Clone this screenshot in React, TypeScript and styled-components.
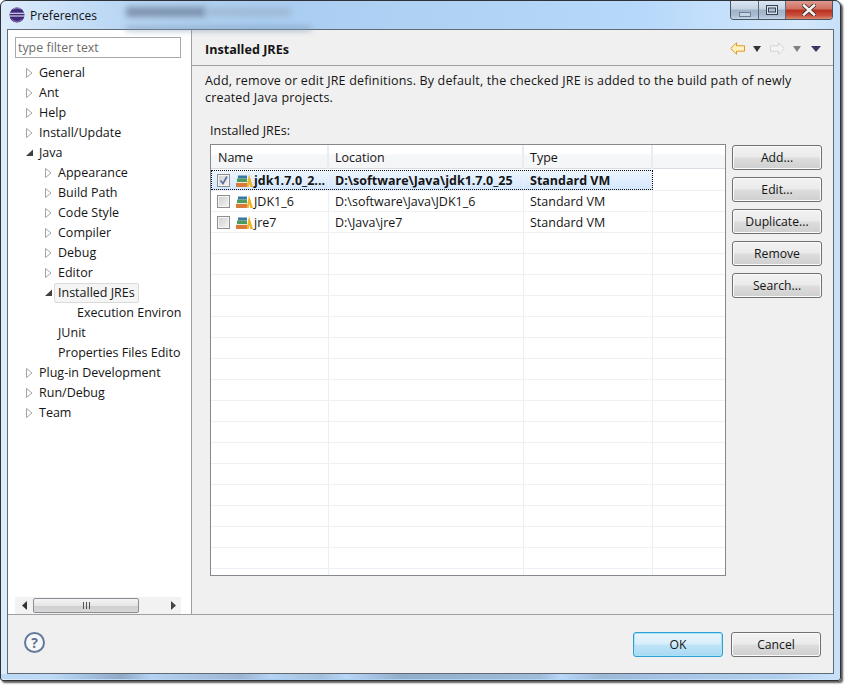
import React from "react";
import styled, { createGlobalStyle } from "styled-components";

const Global = createGlobalStyle`
  html, body { margin: 0; padding: 0; background: #fff; }
  body { font-family: "Open Sans", "Noto Sans", "Liberation Sans", sans-serif; font-size: 12.5px; color: #151515; }
  * { box-sizing: border-box; }
`;

const Page = styled.div`
  width: 845px;
  height: 685px;
  overflow: hidden;
  background: #fff;
`;

const Win = styled.div`
  position: relative;
  width: 841px;
  height: 681px;
  display: flex;
  flex-direction: column;
  border: 1px solid #2e3136;
  border-radius: 6px 6px 3px 3px;
  box-shadow: 2px 2px 2px #5c5c5c;
  overflow: hidden;
  background:
    linear-gradient(90deg, #bcd9f6 0, #bcd9f6 50px, #a9c6e6 80px, #8fa9c6 120px, #b4d2f2 150px, #9db5d2 240px, #b5d3f3 270px, #a4bfdd 320px, #b8d6f6 345px, #93aecd 400px, #a1bcda 540px, #b9d7f7 560px, #9db9d8 600px, #aac8e8 700px, #b0cfee 780px, #c6e0f9 830px) bottom 1px left 0 / 100% 5px no-repeat,
    linear-gradient(90deg, #dcecfb 0, #bcd8f4 110px, #a9cdf0 260px, #b6d8fa 640px, #d4e8fc 800px, #c7e0f8 100%);
`;

const TitleBar = styled.div`
  position: relative;
  height: 28px;
  flex: none;
  display: flex;
  align-items: center;
  padding-left: 8px;
  gap: 5px;
`;

const TitleText = styled.span`
  font-size: 12px;
  color: #111;
`;

const BlurBand = styled.div<{ $left: number; $top: number; $width: number; $height: number; $tone: string }>`
  position: absolute;
  left: ${(p) => p.$left}px;
  top: ${(p) => p.$top}px;
  width: ${(p) => p.$width}px;
  height: ${(p) => p.$height}px;
  background: ${(p) => p.$tone};
  filter: blur(3px);
`;

const Controls = styled.div`
  position: absolute;
  right: 7px;
  top: 0;
  display: flex;
  height: 19px;
  border: 1px solid #4a5562;
  border-top: none;
  border-radius: 0 0 4px 4px;
  overflow: hidden;
`;

const ControlButton = styled.div<{ $w: number; $close?: boolean }>`
  width: ${(p) => p.$w}px;
  display: flex;
  align-items: center;
  justify-content: center;
  border-right: ${(p) => (p.$close ? "none" : "1px solid #5b6978")};
  background: ${(p) =>
    p.$close
      ? "linear-gradient(180deg, #dd9a8e 0, #cf6f60 45%, #b8301d 50%, #c9503d 80%, #d98a70 100%)"
      : "linear-gradient(180deg, #dbe6f2 0, #c3d2e3 45%, #9fb2c8 50%, #a9bcd2 80%, #c4d6e8 100%)"};
`;

const Client = styled.div`
  flex: 1;
  min-height: 0;
  margin: 0 6px 6px;
  border: 1px solid #626a73;
  display: flex;
  flex-direction: column;
  background: #f0f0f0;
`;

const Main = styled.div`
  flex: 1;
  min-height: 0;
  display: flex;
`;

const LeftPane = styled.div`
  width: 184px;
  flex: none;
  display: flex;
  flex-direction: column;
  background: #fff;
  border-right: 1px solid #a0a0a0;
  padding: 7px 10px 0 7px;
`;

const Filter = styled.div`
  height: 21px;
  flex: none;
  border: 1px solid #a9a9a9;
  padding: 0 2px;
  line-height: 19px;
  color: #6d6d6d;
  font-size: 12.4px;
`;

const Tree = styled.div`
  margin-top: 5px;
  flex: 1;
  min-height: 0;
  overflow: hidden;
`;

const TreeRow = styled.div<{ $depth: number }>`
  height: 20px;
  display: flex;
  align-items: center;
  white-space: nowrap;
  padding-left: ${(p) => p.$depth * 19 + 11}px;
`;

const ArrowSlot = styled.span`
  width: 7px;
  height: 10px;
  flex: none;
  margin-right: 5px;
  display: flex;
`;

const TreeLabel = styled.span<{ $selected?: boolean }>`
  height: 20px;
  line-height: 18px;
  flex: none;
  padding: 0 3px;
  margin-left: -3px;
  border: 1px solid ${(p) => (p.$selected ? "#dadada" : "transparent")};
  border-radius: 2px;
  background: ${(p) => (p.$selected ? "#f5f5f5" : "transparent")};
`;

const HScroll = styled.div`
  height: 17px;
  flex: none;
  display: flex;
  align-items: center;
  background: #f2f2f2;
  padding: 0 5px 0 7px;
`;

const Thumb = styled.div`
  width: 106px;
  height: 15px;
  margin-left: 6px;
  margin-right: auto;
  border: 1px solid #8a8f96;
  border-radius: 2px;
  background: linear-gradient(180deg, #f4f4f4 0, #e6e6e6 50%, #cfcfcf 52%, #d8d8d8 100%);
  display: flex;
  align-items: center;
  justify-content: center;
`;

const RightPane = styled.div`
  flex: 1;
  min-width: 0;
  display: flex;
  flex-direction: column;
`;

const Header = styled.div`
  height: 36px;
  flex: none;
  border-bottom: 1px solid #a0a0a0;
  display: flex;
  align-items: center;
  padding: 2px 12px 0 13px;
`;

const HeaderTitle = styled.h1`
  margin: 2px 0 0;
  font-size: 12.6px;
  font-weight: 700;
  flex: 1;
`;

const NavIcons = styled.div`
  display: flex;
  align-items: center;
`;

const Description = styled.p`
  margin: 6px 0 0 13px;
  width: 590px;
  line-height: 17px;
  letter-spacing: 0.17px;
`;

const SectionLabel = styled.div`
  margin: 16px 0 0 18px;
  height: 17px;
  line-height: 17px;
`;

const TableArea = styled.div`
  flex: 1;
  min-height: 0;
  display: flex;
  gap: 6px;
  margin: 5px 11px 38px 18px;
`;

const Table = styled.div`
  width: 517px;
  border: 1px solid #85898d;
  background: #fff;
  overflow: hidden;
`;

const HeaderRow = styled.div`
  height: 24px;
  display: flex;
  background: linear-gradient(180deg, #fff 0, #fff 40%, #f6f7f9 42%, #f4f5f7 100%);
  border-bottom: 1px solid #d8dce2;
`;

const Cols = styled.div<{ $selected?: boolean }>`
  width: 442px;
  flex: none;
  display: grid;
  grid-template-columns: 118px 195px 129px;
  background: ${(p) => (p.$selected ? "linear-gradient(180deg, #eef6fe 0, #d3e6fc 100%)" : "transparent")};
  outline: ${(p) => (p.$selected ? "1px dotted #111" : "none")};
  outline-offset: -1px;
  font-weight: ${(p) => (p.$selected ? 700 : 400)};
`;

const HeadCell = styled.div`
  line-height: 23px;
  padding: 1px 0 0 6px;
  border-right: 2px solid #e9ecf1;
  &:first-child {
    padding-left: 7px;
  }
`;

const Row = styled.div`
  height: 21px;
  display: flex;
  border-bottom: 1px solid #eef0f3;
`;

const RowStrip = styled.div`
  height: 1px;
  background: #fff;
`;

const Cell = styled.div`
  line-height: 19px;
  padding: 1px 0 0 6px;
  border-right: 1px solid #eaeef5;
  white-space: nowrap;
  overflow: hidden;
`;

const NameCell = styled(Cell)`
  display: flex;
  align-items: center;
  padding-left: 6px;
`;

const Check = styled.span<{ $checked?: boolean }>`
  width: 13px;
  height: 13px;
  flex: none;
  margin-right: 6px;
  border: 1px solid #8e8f8f;
  outline: 1px solid #f4f4f4;
  outline-offset: -2px;
  background: linear-gradient(135deg, #cfcfcf 0, #f4f4f4 100%);
  display: flex;
`;

const ButtonColumn = styled.div`
  display: flex;
  flex-direction: column;
  gap: 7px;
  padding-top: 1px;
`;

const Btn = styled.button<{ $primary?: boolean }>`
  width: 90px;
  height: 25px;
  padding: 0;
  font: inherit;
  font-size: 12.2px;
  color: #151515;
  border-radius: 3px;
  border: 1px solid ${(p) => (p.$primary ? "#2f9fd4" : "#707070")};
  box-shadow: inset 0 0 0 1px ${(p) => (p.$primary ? "#a6e3f7" : "#fbfbfb")};
  background: ${(p) =>
    p.$primary
      ? "linear-gradient(180deg, #e9f5fc 0, #d8eefb 48%, #bee4f8 52%, #a8d9f3 100%)"
      : "linear-gradient(180deg, #f2f2f2 0, #ebebeb 48%, #dddddd 52%, #cfcfcf 100%)"};
`;

const Footer = styled.div`
  height: 59px;
  flex: none;
  border-top: 1px solid #a0a0a0;
  display: flex;
  align-items: flex-start;
  padding: 17px 12px 0 16px;
  gap: 8px;
`;

const Help = styled.span`
  width: 21px;
  height: 21px;
  margin-right: auto;
  border: 2px solid #627a9c;
  border-radius: 50%;
  color: #5a7296;
  font-size: 14px;
  font-weight: 700;
  line-height: 17px;
  text-align: center;
  background: #f7f7f9;
`;

const EclipseIcon = () => (
  <svg width="16" height="16" viewBox="0 0 16 16">
    <circle cx="8" cy="8" r="7.5" fill="#3d2a78" />
    <path d="M1 6.3h14M.6 9h14.8" stroke="#f3eefa" strokeWidth="1.1" />
    <path d="M4 2.2a7 7 0 0 1 8 0" stroke="#9c86c4" strokeWidth="1.2" fill="none" />
    <path d="M3 12.5a7 7 0 0 0 10 0" stroke="#7c62ad" strokeWidth="1.4" fill="none" />
  </svg>
);

const OpenArrow = () => (
  <svg width="7" height="10" viewBox="0 0 7 10">
    <path d="M.5.5 6 5 .5 9.5z" fill="#fff" stroke="#a3a3a3" />
  </svg>
);

const ExpandedArrow = () => (
  <svg width="7" height="10" viewBox="0 0 7 10">
    <path d="M7 1.5V8H0z" fill="#404040" />
  </svg>
);

const SmallLeft = () => (
  <svg width="5" height="9" viewBox="0 0 5 9">
    <path d="M5 0v9L0 4.5z" fill="#333" />
  </svg>
);

const SmallRight = () => (
  <svg width="5" height="9" viewBox="0 0 5 9">
    <path d="M0 0v9l5-4.5z" fill="#444" />
  </svg>
);

const NavArrow = ({ back }: { back?: boolean }) => (
  <svg width="15" height="13" viewBox="0 0 15 13">
    <path
      d={back ? "M.7 6.5 6.5.8v3h8v5.4h-8v3z" : "M14.3 6.5 8.5.8v3h-8v5.4h8v3z"}
      fill={back ? "#fff0c0" : "#f4f4f4"}
      stroke={back ? "#dd9a25" : "#d4d4d4"}
    />
  </svg>
);

const NavGap = styled.span`
  width: 9px;
`;

const DropTriangle = styled.svg<{ $ml: number }>`
  margin-left: ${(p) => p.$ml}px;
`;

const Tri = ({ color, w, ml }: { color: string; w: number; ml: number }) => (
  <DropTriangle $ml={ml} width={w} height="6" viewBox={`0 0 ${w} 6`}>
    <path d={`M0 0h${w}L${w / 2} 6z`} fill={color} />
  </DropTriangle>
);

const JreSvg = styled.svg`
  margin-right: 1px;
  flex: none;
`;

const JreIcon = () => (
  <JreSvg width="17" height="14" viewBox="0 0 17 14">
    <rect x="2" y="1.5" width="9" height="3" fill="#3a78a8" />
    <rect x="1" y="4.5" width="10" height="3.5" fill="#4c9a5c" />
    <rect x="0" y="8" width="11" height="1" fill="#e8e8d8" />
    <rect x="0" y="9" width="11" height="4" fill="#d9793a" />
    <path d="M13 0 10.5 13h2.2l.7-4 .8 4H17z" fill="#f0b429" />
  </JreSvg>
);

const CheckMark = () => (
  <svg width="11" height="11" viewBox="0 0 11 11">
    <path d="M2.5 5.5 5 8.5 9 1.5" fill="none" stroke="#5a6ea8" strokeWidth="1.6" />
  </svg>
);

const MinGlyph = styled.svg`
  margin-top: 8px;
`;

type TreeItem = { label: string; depth: number; arrow?: "open" | "expanded"; selected?: boolean };

const treeItems: TreeItem[] = [
  { label: "General", depth: 0, arrow: "open" },
  { label: "Ant", depth: 0, arrow: "open" },
  { label: "Help", depth: 0, arrow: "open" },
  { label: "Install/Update", depth: 0, arrow: "open" },
  { label: "Java", depth: 0, arrow: "expanded" },
  { label: "Appearance", depth: 1, arrow: "open" },
  { label: "Build Path", depth: 1, arrow: "open" },
  { label: "Code Style", depth: 1, arrow: "open" },
  { label: "Compiler", depth: 1, arrow: "open" },
  { label: "Debug", depth: 1, arrow: "open" },
  { label: "Editor", depth: 1, arrow: "open" },
  { label: "Installed JREs", depth: 1, arrow: "expanded", selected: true },
  { label: "Execution Environments", depth: 2 },
  { label: "JUnit", depth: 1 },
  { label: "Properties Files Editor", depth: 1 },
  { label: "Plug-in Development", depth: 0, arrow: "open" },
  { label: "Run/Debug", depth: 0, arrow: "open" },
  { label: "Team", depth: 0, arrow: "open" },
];

const jres = [
  { name: "jdk1.7.0_2...", location: "D:\\software\\Java\\jdk1.7.0_25", type: "Standard VM", selected: true },
  { name: "JDK1_6", location: "D:\\software\\Java\\JDK1_6", type: "Standard VM" },
  { name: "jre7", location: "D:\\Java\\jre7", type: "Standard VM" },
];

const emptyRows = Array.from({ length: 17 }, (_, i) => i);

export default function App() {
  return (
    <Page>
      <Global />
      <Win>
        <TitleBar>
          <BlurBand $left={125} $top={6} $width={80} $height={10} $tone="#7d93ae" />
          <BlurBand $left={205} $top={7} $width={85} $height={8} $tone="#a0b8d4" />
          <BlurBand $left={125} $top={26} $width={185} $height={3} $tone="#7e97b6" />
          <EclipseIcon />
          <TitleText>Preferences</TitleText>
          <Controls>
            <ControlButton $w={28}>
              <MinGlyph width="12" height="5" viewBox="0 0 12 5">
                <rect x=".5" y=".5" width="11" height="4" fill="#c5d3e2" stroke="#6d7d90" />
              </MinGlyph>
            </ControlButton>
            <ControlButton $w={27}>
              <svg width="12" height="10" viewBox="0 0 12 10">
                <rect x=".5" y=".5" width="11" height="9" fill="#d6e2ee" stroke="#39414c" />
                <rect x="2.5" y="3" width="7" height="4" fill="#aebfd2" stroke="#39414c" />
              </svg>
            </ControlButton>
            <ControlButton $w={46} $close>
              <svg width="14" height="12" viewBox="0 0 14 12">
                <path d="M2 1.5 12 10.5M12 1.5 2 10.5" stroke="#3c2a28" strokeWidth="4.2" strokeLinecap="square" />
                <path d="M2 1.5 12 10.5M12 1.5 2 10.5" stroke="#f4f1ee" strokeWidth="2.6" strokeLinecap="square" />
              </svg>
            </ControlButton>
          </Controls>
        </TitleBar>
        <Client>
          <Main>
            <LeftPane>
              <Filter>type filter text</Filter>
              <Tree>
                {treeItems.map((item) => (
                  <TreeRow key={item.label} $depth={item.depth}>
                    <ArrowSlot>
                      {item.arrow === "open" && <OpenArrow />}
                      {item.arrow === "expanded" && <ExpandedArrow />}
                    </ArrowSlot>
                    <TreeLabel $selected={item.selected}>{item.label}</TreeLabel>
                  </TreeRow>
                ))}
              </Tree>
              <HScroll>
                <SmallLeft />
                <Thumb>
                  <svg width="7" height="7" viewBox="0 0 7 7">
                    <path d="M.5 0v7M3.5 0v7M6.5 0v7" stroke="#555" />
                  </svg>
                </Thumb>
                <SmallRight />
              </HScroll>
            </LeftPane>
            <RightPane>
              <Header>
                <HeaderTitle>Installed JREs</HeaderTitle>
                <NavIcons>
                  <NavArrow back />
                  <Tri color="#333" w={8} ml={8} />
                  <NavGap />
                  <NavArrow />
                  <Tri color="#808080" w={8} ml={8} />
                  <Tri color="#3d3566" w={10} ml={10} />
                </NavIcons>
              </Header>
              <Description>
                Add, remove or edit JRE definitions. By default, the checked JRE is added to the build path of newly created Java projects.
              </Description>
              <SectionLabel>Installed JREs:</SectionLabel>
              <TableArea>
                <Table>
                  <HeaderRow>
                    <Cols>
                      <HeadCell>Name</HeadCell>
                      <HeadCell>Location</HeadCell>
                      <HeadCell>Type</HeadCell>
                    </Cols>
                  </HeaderRow>
                  <RowStrip />
                  {jres.map((jre) => (
                    <Row key={jre.name}>
                      <Cols $selected={jre.selected}>
                        <NameCell>
                          <Check $checked={jre.selected}>{jre.selected && <CheckMark />}</Check>
                          <JreIcon />
                          {jre.name}
                        </NameCell>
                        <Cell>{jre.location}</Cell>
                        <Cell>{jre.type}</Cell>
                      </Cols>
                    </Row>
                  ))}
                  {emptyRows.map((i) => (
                    <Row key={i}>
                      <Cols>
                        <Cell />
                        <Cell />
                        <Cell />
                      </Cols>
                    </Row>
                  ))}
                </Table>
                <ButtonColumn>
                  <Btn>Add...</Btn>
                  <Btn>Edit...</Btn>
                  <Btn>Duplicate...</Btn>
                  <Btn>Remove</Btn>
                  <Btn>Search...</Btn>
                </ButtonColumn>
              </TableArea>
            </RightPane>
          </Main>
          <Footer>
            <Help>?</Help>
            <Btn $primary>OK</Btn>
            <Btn>Cancel</Btn>
          </Footer>
        </Client>
      </Win>
    </Page>
  );
}
